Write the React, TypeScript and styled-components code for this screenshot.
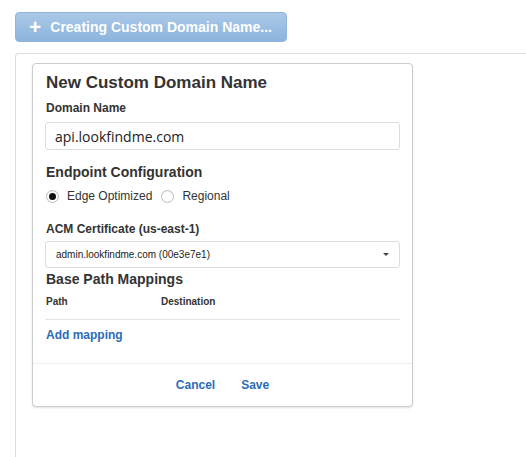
import React from 'react';
import styled, { createGlobalStyle } from 'styled-components';

const GlobalStyle = createGlobalStyle`
  body {
    margin: 0;
    background: #fff;
    font-family: "Liberation Sans", Arial, sans-serif;
    color: #333;
  }
`;

const Page = styled.div`
  padding: 12px 0 0 15px;
  height: 445px;
  display: flex;
  flex-direction: column;
`;

const CreateButton = styled.button`
  width: 272px;
  height: 30px;
  display: flex;
  align-items: center;
  gap: 9px;
  padding: 0 0 0 13px;
  border: 1px solid #93b5db;
  border-radius: 4px;
  background: linear-gradient(#abc9e8, #8cb4dd);
  color: #fff;
  font-family: inherit;
  font-weight: bold;
  font-size: 14px;
  cursor: default;
`;

const Plus = styled.span`
  font-size: 21px;
  line-height: 1;
  margin-top: -2px;
`;

const Panel = styled.div`
  margin-top: 11px;
  flex: 1;
  border-left: 1px solid #ddd;
  border-top: 1px solid #ddd;
  border-top-left-radius: 4px;
  padding: 9px 0 0 16px;
`;

const Card = styled.div`
  width: 379px;
  border: 1px solid #ccc;
  border-radius: 4px;
  box-shadow: 0 1px 2px rgba(0, 0, 0, 0.12);
  background: #fff;
`;

const Body = styled.div`
  padding: 9px 12px 0 12px;
  display: flex;
  flex-direction: column;
`;

const Title = styled.h2<{ $size: number; $top: number }>`
  margin: ${({ $top }) => $top}px 0 0 1px;
  font-size: ${({ $size }) => $size}px;
  line-height: 20px;
  font-weight: bold;
  color: #333;
`;

const Label = styled.div<{ $size: number; $top: number }>`
  margin: ${({ $top }) => $top}px 0 0 1px;
  font-size: ${({ $size }) => $size}px;
  line-height: 16px;
  font-weight: bold;
  color: #333;
`;

const TextInput = styled.div`
  margin-top: 6px;
  height: 26px;
  border: 1px solid #ddd;
  border-radius: 3px;
  padding: 0 9px;
  display: flex;
  align-items: center;
  font-family: "Open Sans", sans-serif;
  font-size: 14px;
  color: #222;
`;

const RadioRow = styled.div`
  margin-top: 4px;
  height: 20px;
  display: flex;
  align-items: center;
  font-size: 12px;
  color: #333;
`;

const RadioOption = styled.label`
  display: flex;
  align-items: center;
  gap: 8px;
  margin-right: 8px;
`;

const RadioCircle = styled.span<{ $checked?: boolean }>`
  width: 13px;
  height: 13px;
  margin-left: 1px;
  box-sizing: border-box;
  border: 1px solid #bbb;
  border-radius: 50%;
  background: #fff;
  box-shadow: inset 0 1px 1px rgba(0, 0, 0, 0.06);
  display: flex;
  align-items: center;
  justify-content: center;

  &::after {
    content: '';
    width: 7px;
    height: 7px;
    border-radius: 50%;
    background: ${({ $checked }) => ($checked ? '#111' : 'transparent')};
  }
`;

const Select = styled.div`
  margin-top: 4px;
  height: 25px;
  border: 1px solid #ddd;
  border-radius: 3px;
  padding: 0 10px 0 10px;
  display: flex;
  align-items: center;
  justify-content: space-between;
  font-size: 10px;
  color: #222;
`;

const Caret = styled.span`
  width: 0;
  height: 0;
  border-left: 3px solid transparent;
  border-right: 3px solid transparent;
  border-top: 3px solid #444;
`;

const MappingHead = styled.div`
  margin-top: 6px;
  display: flex;
  padding: 0 0 10px 1px;
  border-bottom: 1px solid #e5e5e5;
  font-size: 10px;
  line-height: 14px;
  font-weight: bold;
  color: #333;
`;

const HeadCell = styled.span<{ $width?: number }>`
  width: ${({ $width }) => ($width ? `${$width}px` : 'auto')};
`;

const LinkButton = styled.a`
  font-size: 12px;
  line-height: 16px;
  font-weight: bold;
  color: #2b6cb8;
  text-decoration: none;
  cursor: pointer;
`;

const AddLink = styled(LinkButton)`
  margin: 7px 0 0 1px;
`;

const Footer = styled.div`
  margin-top: 20px;
  border-top: 1px solid #eee;
  height: 41px;
  display: flex;
  align-items: center;
  justify-content: center;
  gap: 26px;
  padding-bottom: 1px;
`;

export default function App() {
  return (
    <>
      <GlobalStyle />
      <Page>
        <CreateButton>
          <Plus>+</Plus>
          Creating Custom Domain Name...
        </CreateButton>
        <Panel>
          <Card>
            <Body>
              <Title $size={17} $top={0}>New Custom Domain Name</Title>
              <Label $size={12} $top={7}>Domain Name</Label>
              <TextInput>api.lookfindme.com</TextInput>
              <Title $size={14} $top={12}>Endpoint Configuration</Title>
              <RadioRow>
                <RadioOption>
                  <RadioCircle $checked />
                  Edge Optimized
                </RadioOption>
                <RadioOption>
                  <RadioCircle />
                  Regional
                </RadioOption>
              </RadioRow>
              <Label $size={12} $top={15}>ACM Certificate (us-east-1)</Label>
              <Select>
                <span>admin.lookfindme.com (00e3e7e1)</span>
                <Caret />
              </Select>
              <Title $size={14} $top={1}>Base Path Mappings</Title>
              <MappingHead>
                <HeadCell $width={115}>Path</HeadCell>
                <HeadCell>Destination</HeadCell>
              </MappingHead>
              <AddLink>Add mapping</AddLink>
            </Body>
            <Footer>
              <LinkButton>Cancel</LinkButton>
              <LinkButton>Save</LinkButton>
            </Footer>
          </Card>
        </Panel>
      </Page>
    </>
  );
}
